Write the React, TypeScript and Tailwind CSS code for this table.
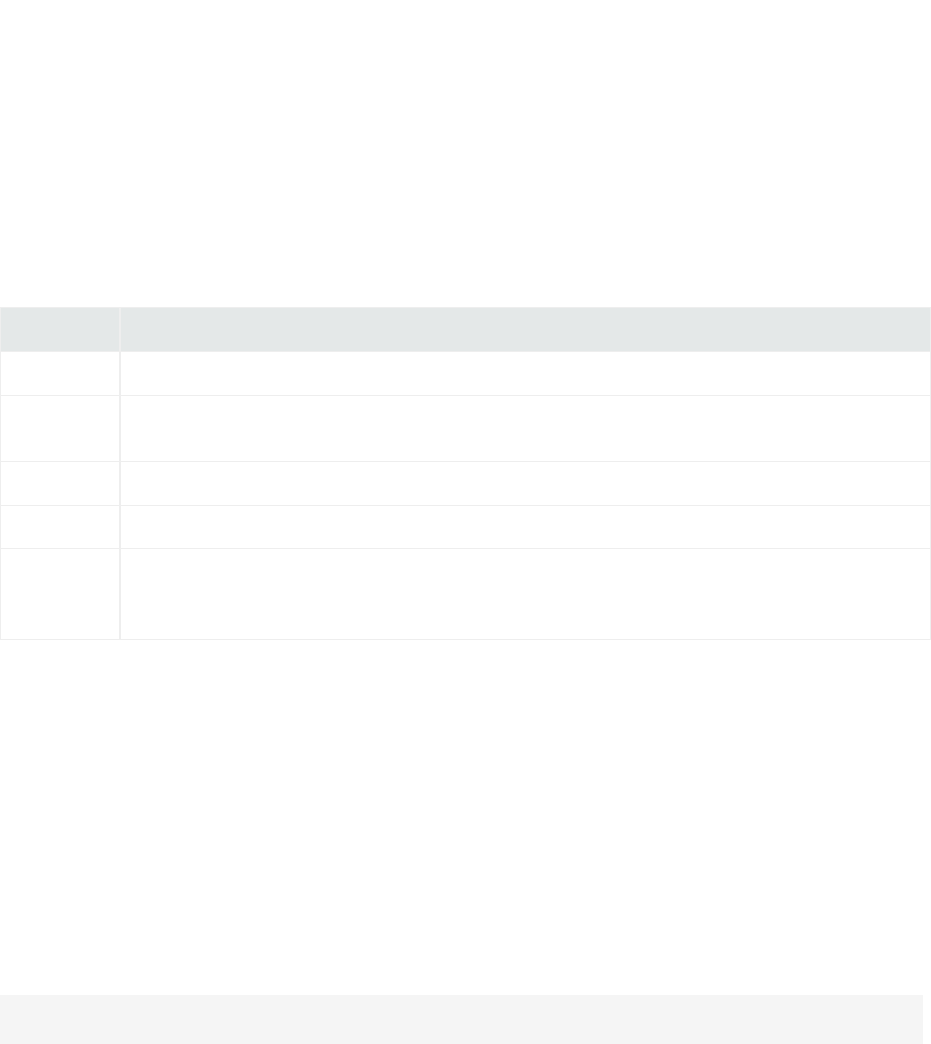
export default function App() {
  const rows = [44, 66, 44, 43, 91];
  return (
    <div className="min-h-[1044px] bg-white flex flex-col font-['Liberation_Sans',Arial,sans-serif]">
      <div className="h-[307px]" />
      <table className="w-[931px] border-collapse table-fixed">
        <thead>
          <tr className="h-[44px] bg-[#e4e8e8]">
            <th className="w-[119px] border border-r-2 border-[#eeeeee]"></th>
            <th className="border border-[#eeeeee]"></th>
          </tr>
        </thead>
        <tbody>
          {rows.map((h, i) => (
            <tr key={i} className="bg-white" style={{ height: h }}>
              <td className="border border-r-2 border-[#eeeeee]"></td>
              <td className="border border-[#eeeeee]"></td>
            </tr>
          ))}
        </tbody>
      </table>
      <div className="h-[355px]" />
      <div className="w-[923px] h-[49px] bg-[#f5f5f5]" />
    </div>
  );
}
